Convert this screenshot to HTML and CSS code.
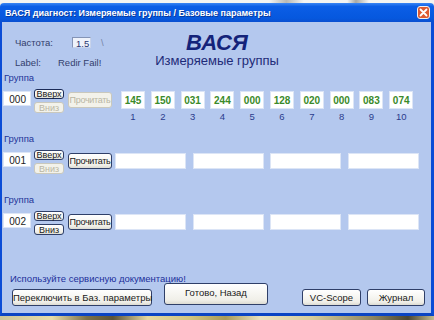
FILE: index.html
```html
<!DOCTYPE html>
<html lang="ru">
<head>
    <meta charset="UTF-8">
    <meta name="viewport" content="width=device-width, initial-scale=1.0">
    <title>ВАСЯ диагност</title>
    <link rel="stylesheet" href="styles.css">
</head>
<body>
    <div class="desk-top"></div>
    <div class="window">
        <div class="titlebar">
            <span class="title">ВАСЯ диагност: Измеряемые группы / Базовые параметры</span>
            <span class="close">
                <svg width="9" height="9" viewBox="0 0 9 9"><path d="M1.5 1.5L7.5 7.5M7.5 1.5L1.5 7.5" stroke="#fff" stroke-width="1.8" stroke-linecap="round"/></svg>
            </span>
        </div>
        <div class="content">
            <div class="header">
                <div class="info">
                    <div class="info-row">
                        <span class="info-label">Частота:</span>
                        <span class="freq">1.5</span>
                        <span class="spin">\</span>
                    </div>
                    <div class="info-row">
                        <span class="info-label">Label:</span>
                        <span>Redir Fail!</span>
                    </div>
                </div>
                <div class="brand">
                    <div class="brand-name">ВАСЯ</div>
                    <div class="brand-sub">Измеряемые группы</div>
                </div>
                <div></div>
            </div>

            <div class="group">
                <div class="group-label">Группа</div>
                <div class="group-row">
                    <div class="grp-num">000</div>
                    <div class="updown">
                        <button class="btn small focus">Вверх</button>
                        <button class="btn small down" disabled>Вниз</button>
                    </div>
                    <button class="btn read" disabled>Прочитать</button>
                    <div class="vals">
                        <div class="val"><div class="val-box">145</div><div class="val-num">1</div></div>
                        <div class="val"><div class="val-box">150</div><div class="val-num">2</div></div>
                        <div class="val"><div class="val-box">031</div><div class="val-num">3</div></div>
                        <div class="val"><div class="val-box">244</div><div class="val-num">4</div></div>
                        <div class="val"><div class="val-box">000</div><div class="val-num">5</div></div>
                        <div class="val"><div class="val-box">128</div><div class="val-num">6</div></div>
                        <div class="val"><div class="val-box">020</div><div class="val-num">7</div></div>
                        <div class="val"><div class="val-box">000</div><div class="val-num">8</div></div>
                        <div class="val"><div class="val-box">083</div><div class="val-num">9</div></div>
                        <div class="val"><div class="val-box">074</div><div class="val-num">10</div></div>
                    </div>
                </div>
            </div>

            <div class="group">
                <div class="group-label">Группа</div>
                <div class="group-row">
                    <div class="grp-num">001</div>
                    <div class="updown">
                        <button class="btn small">Вверх</button>
                        <button class="btn small down" disabled>Вниз</button>
                    </div>
                    <button class="btn read">Прочитать</button>
                    <div class="fields">
                        <div class="field"></div>
                        <div class="field"></div>
                        <div class="field"></div>
                        <div class="field"></div>
                    </div>
                </div>
            </div>

            <div class="group">
                <div class="group-label">Группа</div>
                <div class="group-row">
                    <div class="grp-num">002</div>
                    <div class="updown">
                        <button class="btn small">Вверх</button>
                        <button class="btn small down">Вниз</button>
                    </div>
                    <button class="btn read">Прочитать</button>
                    <div class="fields">
                        <div class="field"></div>
                        <div class="field"></div>
                        <div class="field"></div>
                        <div class="field"></div>
                    </div>
                </div>
            </div>

            <div class="footer">
                <div class="note">Используйте сервисную документацию!</div>
                <div class="actions">
                    <button class="btn act switch">Переключить в Баз. параметры</button>
                    <button class="btn act done">Готово, Назад</button>
                    <button class="btn act scope">VC-Scope</button>
                    <button class="btn act log">Журнал</button>
                </div>
            </div>
        </div>
    </div>
    <div class="desk-bottom"></div>
</body>
</html>
```

FILE: styles.css
```css
body {
    margin: 0;
    width: 434px;
    height: 320px;
    overflow: hidden;
    background: #efeeea;
    font-family: "Liberation Sans", Arial, sans-serif;
    font-size: 9.5px;
    color: #33406d;
}
.desk-top {
    height: 3px;
    background: linear-gradient(90deg, #f4f4f2 0%, #f4f4f2 62%, #b9b9b4 66%, #f4f4f2 70%, #f4f4f2 80%, #a9a9a4 82%, #f4f4f2 85%);
}
.window {
    height: 313px;
    display: flex;
    flex-direction: column;
}
.titlebar {
    height: 19px;
    flex-shrink: 0;
    display: flex;
    align-items: center;
    padding: 0 4px 0 5px;
    background: linear-gradient(#3a86f4 0%, #0b5ee6 18%, #0658de 80%, #0a4fd0 100%);
    border-radius: 4px 4px 0 0;
}
.title {
    flex: 1;
    color: #fff;
    font-weight: bold;
    font-size: 9px;
    text-shadow: 1px 1px 0 #0a3a9a;
}
.close {
    width: 13px;
    height: 13px;
    box-sizing: border-box;
    border: 1px solid #f4f0ee;
    border-radius: 3px;
    background: #de5a30;
    display: flex;
    align-items: center;
    justify-content: center;
}
.content {
    flex: 1;
    display: flex;
    flex-direction: column;
    background: #b4c8ee;
    border-left: 2px solid #0a4cd6;
    border-right: 3px solid #0a4cd6;
    border-bottom: 3px solid #0a44c4;
    padding: 0 0 7px 1px;
}

/* header */
.header {
    height: 50px;
    display: grid;
    grid-template-columns: 1fr auto 1fr;
}
.info {
    padding: 14px 0 0 12px;
    display: flex;
    flex-direction: column;
    gap: 8px;
}
.info-row {
    display: flex;
    align-items: center;
    height: 12px;
    white-space: nowrap;
}
.info-label {
    width: 43px;
}
.freq {
    margin-left: 14px;
    width: 19px;
    height: 11px;
    line-height: 11px;
    box-sizing: border-box;
    padding-left: 3px;
    background: #eef2fb;
    border: 1px solid #c8d3ea;
    border-left-color: #8494b6;
    border-top-color: #8494b6;
    color: #2a3570;
}
.spin {
    margin-left: 10px;
    color: #7785a8;
}
.brand {
    padding-top: 10px;
    text-align: center;
}
.brand-name {
    font-size: 22px;
    line-height: 22px;
    font-weight: bold;
    font-style: italic;
    color: #14237a;
}
.brand-sub {
    font-size: 13px;
    line-height: 13px;
    color: #1e2b78;
}

/* groups */
.group {
    height: 61px;
}
.group-label {
    line-height: 12px;
    margin-left: 1px;
    color: #1f3599;
}
.group-row {
    margin-top: 5px;
    display: flex;
    align-items: flex-start;
}
.grp-num {
    margin-top: 2px;
    width: 28px;
    height: 15px;
    line-height: 15px;
    box-sizing: border-box;
    padding-right: 4px;
    text-align: right;
    background: #fff;
    border: 1px solid #dce5f6;
    color: #222;
    font-size: 10px;
}
.updown {
    margin-left: 3px;
    width: 30px;
    display: flex;
    flex-direction: column;
    gap: 3px;
}
.btn {
    font-family: "Liberation Sans", Arial, sans-serif;
    font-size: 9.5px;
    color: #1a1a1a;
    padding: 0;
    margin: 0;
    box-sizing: border-box;
    background: linear-gradient(#ffffff, #f0efe8 80%, #dcdbd2);
    border: 1px solid #2f3f68;
    border-radius: 3px;
    white-space: nowrap;
}
.btn:disabled {
    color: #b9b6a4;
    background: #f3f2ea;
    border-color: #c9c8bd;
}
.small {
    height: 10px;
    line-height: 8px;
    font-size: 9px;
}
.small.down {
    height: 11px;
}
.focus {
    border-width: 1.5px;
    border-color: #1c2c58;
}
.read {
    margin-left: 4px;
    margin-top: 3px;
    width: 44px;
    height: 16px;
    font-size: 9px;
    letter-spacing: -0.3px;
}
.vals {
    margin-left: 9px;
    display: flex;
    gap: 5.8px;
}
.val {
    width: 24px;
    margin-top: 2px;
}
.val-box {
    height: 18px;
    line-height: 18px;
    text-align: center;
    background: #fff;
    border: 1px solid #dce5f6;
    box-sizing: border-box;
    color: #3a8a2a;
    font-weight: bold;
    font-size: 10px;
}
.val-num {
    margin-top: 2px;
    line-height: 12px;
    text-align: center;
    color: #2b3b8c;
}
.fields {
    margin-left: 3px;
    margin-top: 3px;
    display: flex;
    gap: 6.5px;
}
.field {
    width: 71px;
    height: 16px;
    box-sizing: border-box;
    background: #fff;
    border: 1px solid #dce5f6;
}

/* footer */
.footer {
    margin-top: auto;
}
.note {
    margin-left: 7px;
    line-height: 11px;
    margin-bottom: -1px;
    color: #1c2f9a;
}
.actions {
    display: flex;
    align-items: flex-end;
    padding-right: 6px;
}
.act {
    height: 17px;
}
.switch {
    margin-left: 9px;
    width: 140px;
}
.done {
    margin-left: 12px;
    width: 104px;
    height: 22px;
    margin-bottom: 1px;
    padding-bottom: 3px;
}
.scope {
    margin-left: auto;
    width: 59px;
}
.log {
    margin-left: 6px;
    width: 58px;
}
.desk-bottom {
    height: 4px;
    background: linear-gradient(90deg, #c9c49a 0%, #e6dca8 12%, #7a7048 20%, #5c5438 26%, #e4d8a0 34%, #cfc37e 44%, #a89a58 52%, #e8e2c0 60%, #d6cc9a 72%, #8c8460 86%, #4a4634 94%, #c4bc90 100%);
}
```
